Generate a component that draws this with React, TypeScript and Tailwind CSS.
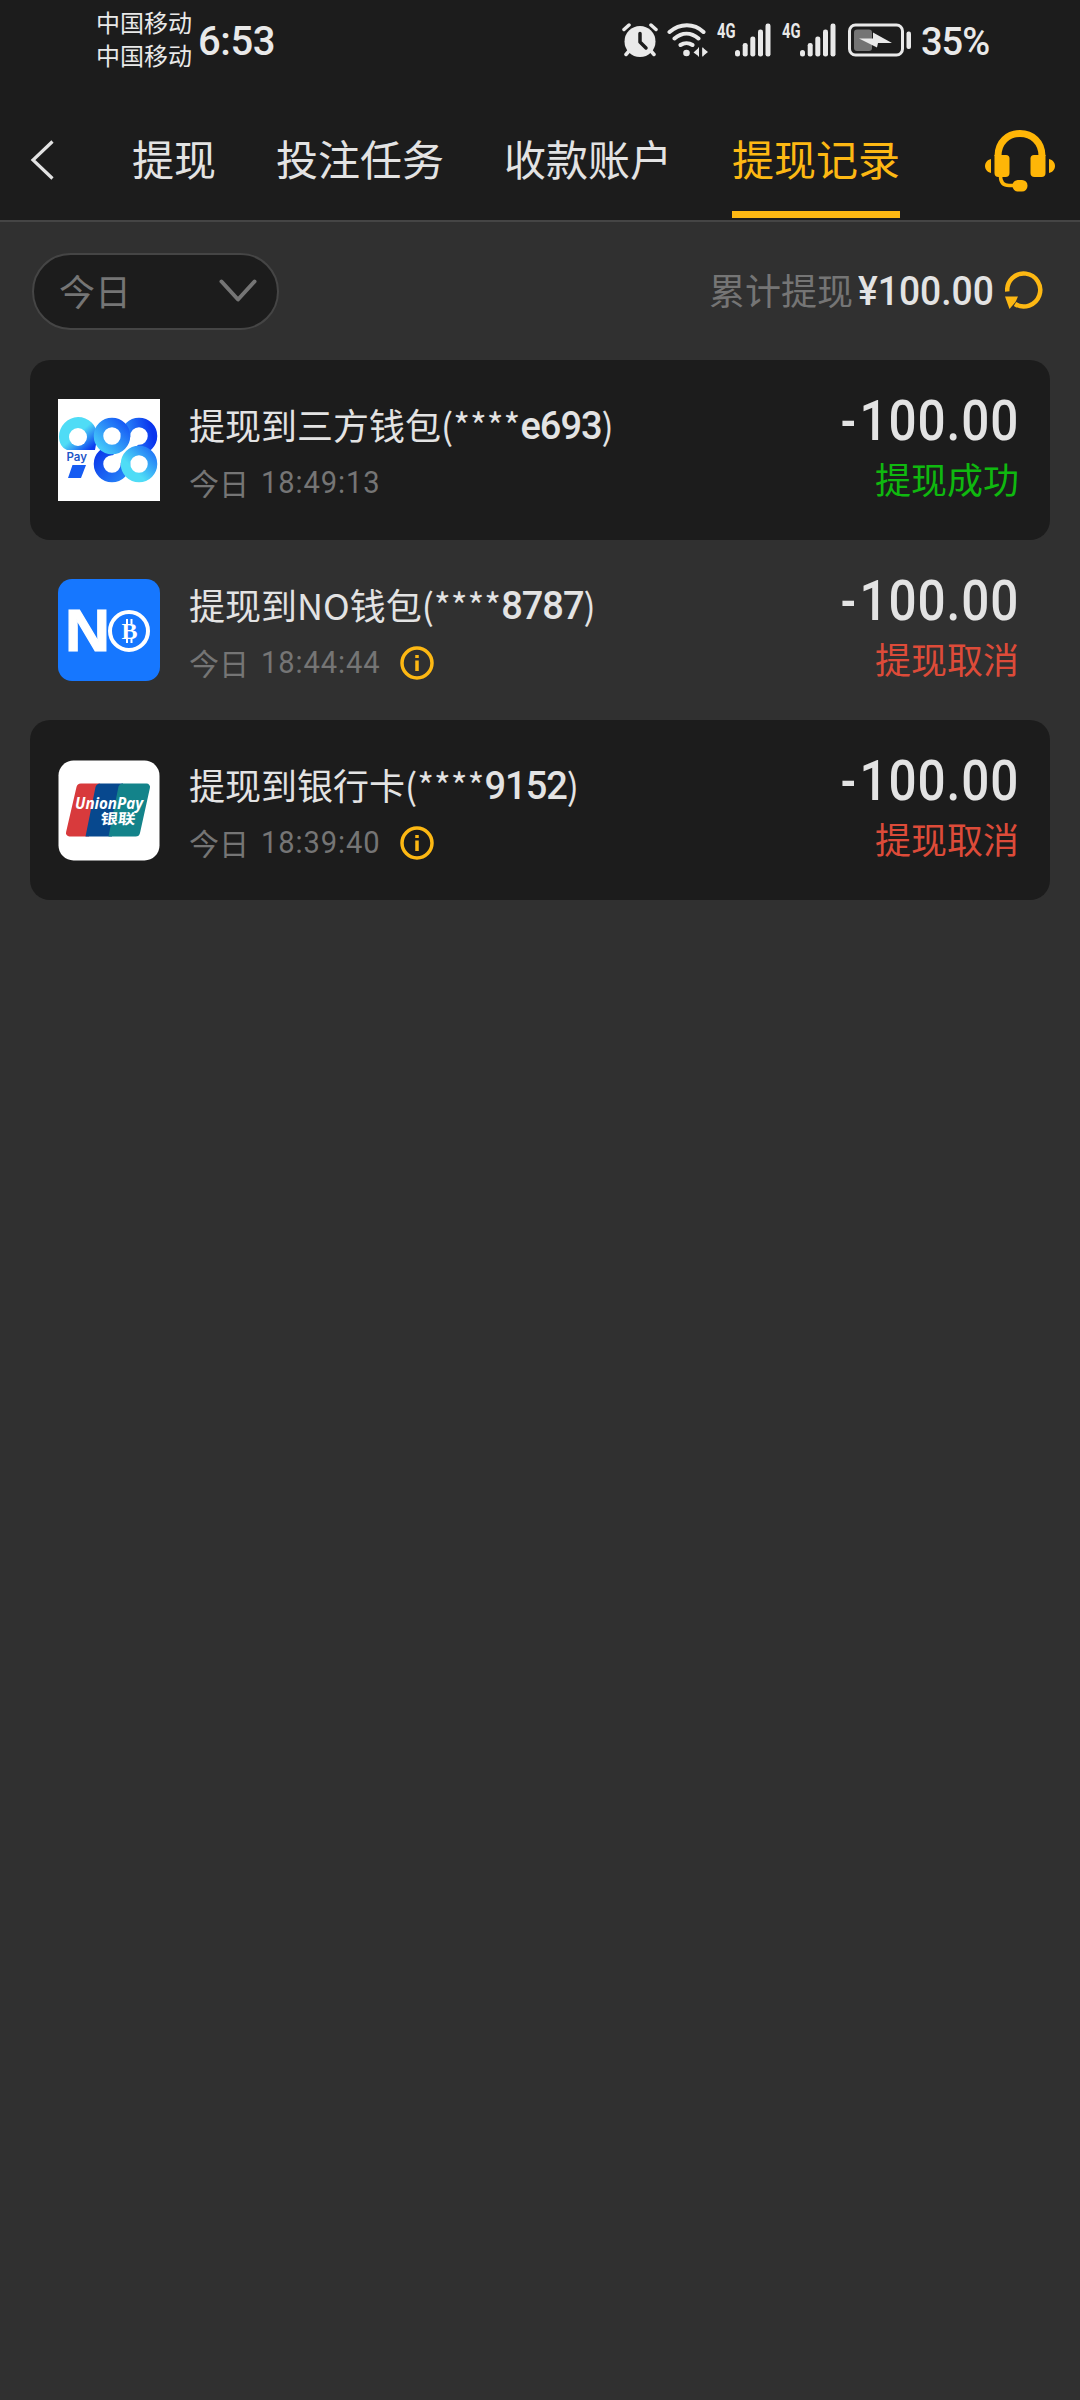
const cjk = "font-['Noto_Sans_CJK_SC',sans-serif]";
const num = "font-[Roboto,sans-serif] whitespace-nowrap";

const tabs = ["提现", "投注任务", "收款账户", "提现记录"];

const records = [
  { logo: "pay988", name: "提现到三方钱包", tail: "e693", time: "18:49:13", ok: true },
  { logo: "no", name: "提现到NO钱包", tail: "8787", time: "18:44:44", ok: false },
  { logo: "union", name: "提现到银行卡", tail: "9152", time: "18:39:40", ok: false },
];

export default function App() {
  return (
    <main className={`h-[2400px] w-[1080px] overflow-hidden bg-[#303030] ${cjk}`}>
      <header className="h-[222px] border-b-2 border-[#454545] bg-[#1c1c1c]">
        <StatusBar />
        <NavBar />
      </header>

      <div className="flex h-[138px] items-center justify-between pr-[37px] pl-8">
        <button className="flex h-[77px] w-[247px] items-center justify-between rounded-full border-2 border-[#454545] bg-[#1c1c1c] pr-5 pb-[2px] pl-[25px] text-[36px] text-[#757575]">
          <span>今日</span>
          <svg viewBox="0 0 38 24" className="mt-[2px] h-6 w-[38px]" fill="none" stroke="currentColor" strokeWidth="4" strokeLinecap="round" strokeLinejoin="round">
            <path d="M2.5 2.5 L19 20.5 L35.5 2.5" />
          </svg>
        </button>
        <div className="flex items-center pb-[2px]">
          <span className="pb-[3px] text-[36px] text-[#757575]">累计提现</span>
          <span className={`ml-[5px] w-[135px] origin-left scale-x-[0.93] pt-[3px] text-[40px] font-medium text-[#e3e3e3] ${num}`}>¥100.00</span>
          <Refresh />
        </div>
      </div>

      <ul className="px-[30px]">
        {records.map((r) => (
          <li key={r.tail} className="flex h-[180px] items-center rounded-[20px] pr-[31px] pl-7 odd:bg-[#1c1c1c]">
            {r.logo === "pay988" ? <Pay988 /> : r.logo === "no" ? <NoWallet /> : <UnionPay />}
            <div className="ml-[29px] flex-1 pt-[6px]">
              <p className="flex h-[56px] items-center text-[36px] whitespace-pre text-[#e3e3e3]">
                {r.name}(<span>****</span>
                <span className={`pt-[4px] text-[38px] font-medium tracking-[-1px] ${num}`}>{r.tail}</span>)
              </p>
              <p className="mt-[2px] flex h-[56px] items-center text-[30px] text-[#757575]">
                今日
                <span className={`ml-3 w-[120px] origin-left scale-x-[0.91] text-[32px] tracking-[1px] ${num}`}>{r.time}</span>
                {!r.ok && <Info />}
              </p>
            </div>
            <div className="flex flex-col items-end pb-[7px]">
              <span className={`flex h-[62px] origin-right scale-x-90 items-center pt-[1px] text-[55px] font-medium tracking-[1px] text-[#e3e3e3] ${num}`}>
                <span className="mr-[3px] origin-right scale-x-90">-</span>
                100.00
              </span>
              <span className={`flex h-[52px] items-center text-[36px] ${r.ok ? "text-[#0fb80f]" : "text-[#dd4b39]"}`}>
                {r.ok ? "提现成功" : "提现取消"}
              </span>
            </div>
          </li>
        ))}
      </ul>
    </main>
  );
}

function StatusBar() {
  return (
    <div className="flex h-20 items-center pl-[96px] text-[#e9e9e9]">
      <div className="pb-[4px] text-[24px] leading-[33px]">
        <p>中国移动</p>
        <p>中国移动</p>
      </div>
      <span className={`ml-[6px] w-[424px] pt-[4px] text-[40px] font-medium tracking-[-0.4px] ${num}`}>6:53</span>
      <Alarm />
      <Wifi />
      <Signal />
      <Signal />
      <Battery />
      <span className={`ml-[9px] pt-[4px] text-[38px] font-medium tracking-[-1px] ${num}`}>35%</span>
    </div>
  );
}

function NavBar() {
  return (
    <nav className="flex h-[140px] items-center pt-5 text-[42px] text-[#e3e3e3]">
      <svg viewBox="0 0 24 40" className="ml-[30px] h-10 w-6" fill="none" stroke="currentColor" strokeWidth="3.2">
        <path d="M22.5 1.5 L3 20 L22.5 38.5" />
      </svg>
      <div className="ml-[78px] flex gap-[60px]">
        {tabs.map((t) => (
          <span
            key={t}
            className={
              t === "提现记录"
                ? "flex h-[116px] items-center border-b-[7px] border-[#fdb813] pt-[2px] text-[#fdb813]"
                : "flex h-[116px] items-center pt-[2px] pb-[7px]"
            }
          >
            {t}
          </span>
        ))}
      </div>
      <Headset />
    </nav>
  );
}

function Headset() {
  return (
    <svg viewBox="0 0 70 62" className="mt-[2px] ml-[85px] h-[62px] w-[70px]" fill="#ffb607">
      <path d="M13 26 C13 12 23 3.500 35 3.500 C47 3.500 57 12 57 26" fill="none" stroke="#ffb607" strokeWidth="7" />
      <path d="M9.500 25 H21 a3.500 3.500 0 0 1 3.500 3.500 V43 a4 4 0 0 1-4 4 H13.500 a4 4 0 0 1-4-4 Z" />
      <path d="M60.500 25 H49 a3.500 3.500 0 0 0-3.500 3.500 V43 a4 4 0 0 0 4 4 H56.500 a4 4 0 0 0 4-4 Z" />
      <path d="M6 29 V43 C-2 41 -2 31 6 29 Z M64 29 V43 C72 41 72 31 64 29 Z" />
      <path d="M15.500 46 C15.500 53 19 55.500 24 55.500 H29" fill="none" stroke="#ffb607" strokeWidth="3.500" />
      <rect x="27.500" y="50" width="15" height="11.500" rx="5.500" />
    </svg>
  );
}

function Refresh() {
  return (
    <svg viewBox="0 0 38 40" className="ml-[12px] h-10 w-[38px]" fill="none" stroke="#fdb813" strokeWidth="4.500">
      <path d="M2.300 21.500 A16.500 16.500 0 1 1 10 34" />
      <path d="M0 26.500 L13 26.500 L10.500 32 L4.500 39 Z" fill="#fdb813" stroke="none" />
    </svg>
  );
}

function Info() {
  return (
    <svg viewBox="0 0 34 34" className="ml-[19px] mt-[1px] h-[34px] w-[34px]" fill="none" stroke="#fdb813" strokeWidth="3.500">
      <circle cx="17" cy="17" r="15" />
      <path d="M17 14.500 V25 M17 9 V12" />
    </svg>
  );
}

function Pay988() {
  return (
    <svg viewBox="0 0 102 102" className="h-[102px] w-[102px]">
      <defs>
        <linearGradient id="nine" x1="0" y1="0" x2="1" y2="1">
          <stop offset="0.5" stopColor="#4fdcf6" />
          <stop offset="0.9" stopColor="#0b3cf0" />
        </linearGradient>
        <linearGradient id="top" x1="0" y1="1" x2="1" y2="0">
          <stop offset="0" stopColor="#48d0fa" />
          <stop offset="1" stopColor="#1557f5" />
        </linearGradient>
        <linearGradient id="end" x1="0" y1="0.6" x2="1" y2="0.4">
          <stop offset="0" stopColor="#2d8cf8" />
          <stop offset="1" stopColor="#0a35ee" />
        </linearGradient>
        <linearGradient id="low" x1="0" y1="0" x2="1" y2="1">
          <stop offset="0" stopColor="#0b38ea" />
          <stop offset="1" stopColor="#2683f8" />
        </linearGradient>
        <linearGradient id="last" x1="0" y1="1" x2="1" y2="0">
          <stop offset="0.3" stopColor="#4fdcf6" />
          <stop offset="1" stopColor="#2176f7" />
        </linearGradient>
      </defs>
      <rect width="102" height="102" fill="#fff" />
      <path d="M20 18 A19.500 19.500 0 0 1 39.500 37 L37 51 H9 C4 49 1 44 1 37.500 A19.500 19.500 0 0 1 20 18 Z" fill="url(#nine)" />
      <circle cx="20" cy="38" r="9" fill="#fff" />
      <circle cx="54" cy="65" r="13.500" fill="none" stroke="url(#low)" strokeWidth="9.500" />
      <circle cx="81" cy="37" r="13.500" fill="none" stroke="url(#end)" strokeWidth="9.500" />
      {/* the two dark rings open into each other along the diagonal */}
      <path d="M81 37 L54 65" stroke="#fff" strokeWidth="11" />
      <circle cx="54" cy="37" r="13.500" fill="none" stroke="url(#top)" strokeWidth="9.500" />
      <circle cx="81" cy="65" r="13.500" fill="none" stroke="url(#last)" strokeWidth="9.500" />
      <text x="8.500" y="62" fontFamily="Inter" fontSize="11.500" fontWeight="600" fill="#1d55c8">Pay</text>
      <path d="M14.500 66 H28 L23 79 H10 Z" fill="#165cf2" />
    </svg>
  );
}

function NoWallet() {
  return (
    <svg viewBox="0 0 102 102" className="h-[102px] w-[102px]">
      <rect width="102" height="102" rx="14" fill="#1677ff" />
      <text x="7" y="72" fontFamily="Liberation Sans" fontSize="59" fontWeight="700" fill="#fff" stroke="#fff" strokeWidth="1.200" textLength="45" lengthAdjust="spacingAndGlyphs">N</text>
      <circle cx="71" cy="52" r="19" fill="none" stroke="#fff" strokeWidth="4" />
      <text x="63.500" y="60" fontFamily="Liberation Serif" fontSize="24" fontWeight="700" fill="#fff">B</text>
      <path d="M69 40 V45 M73.500 40 V45 M69 59 V64 M73.500 59 V64" stroke="#fff" strokeWidth="2" />
    </svg>
  );
}

function UnionPay() {
  return (
    <svg viewBox="0 0 102 102" className="h-[102px] w-[102px]">
      <rect x="0.500" y="1.500" width="101" height="100" rx="15" fill="#fff" />
      <path d="M23 24.500 H42 L31 77.500 H11.500 a3.500 3.500 0 0 1-3.400-4.500 L18.500 28 a4.500 4.500 0 0 1 4.500-3.500 Z" fill="#d83a3c" />
      <path d="M42.500 24.500 H65 L54 77.500 H27.500 L37.500 28 a5 5 0 0 1 5-3.500 Z" fill="#07488e" />
      <path d="M64 24.500 H88.500 a3.500 3.500 0 0 1 3.400 4.500 L82 74 a4.500 4.500 0 0 1-4.500 3.500 H50.500 L60.500 27.500 a4.500 4.500 0 0 1 3.500-3 Z" fill="#13838a" />
      <g fill="#fff" fontWeight="700">
        <text x="17" y="49.500" fontFamily="Open Sans" fontSize="16" fontStyle="italic" textLength="68" lengthAdjust="spacingAndGlyphs">UnionPay</text>
        <text x="43" y="65.500" fontFamily="Noto Sans CJK SC" fontSize="14.500" textLength="35" lengthAdjust="spacingAndGlyphs" transform="skewX(-6) translate(6 0)">银联</text>
      </g>
    </svg>
  );
}

function Alarm() {
  return (
    <svg viewBox="0 0 36 34" className="h-[34px] w-9" fill="none" stroke="currentColor" strokeLinecap="round">
      <circle cx="18" cy="18.500" r="15.500" fill="currentColor" stroke="none" />
      <path d="M2 6.500 L7 2 M34 6.500 L29 2 M7 28 L4 31.500 M29 28 L32 31.500" strokeWidth="3.500" />
      <path d="M18 10.500 V19 L24 25" stroke="#1c1c1c" strokeWidth="3.500" strokeLinejoin="round" />
    </svg>
  );
}

function Wifi() {
  return (
    <svg viewBox="0 0 42 34" className="ml-[9px] h-[34px] w-[42px]" fill="none" stroke="currentColor" strokeWidth="4" strokeLinecap="round">
      <path d="M2.500 9 C13 0 27 0 36.500 9 M7.500 15.500 C15 9 24 9 31.500 15.500 M13.500 22 C17 19.500 22 19.500 25.500 22" />
      <circle cx="19.500" cy="30" r="3.300" fill="currentColor" stroke="none" />
      <path d="M32 24.500 V33.500 L26.500 29.500 Z M35.500 24.500 L41 29 L35.500 33.500 Z" fill="currentColor" stroke="none" />
      <path d="M31.500 25 V33 M35.800 25 V33" strokeWidth="1" />
    </svg>
  );
}

function Signal() {
  return (
    <svg viewBox="0 0 54 34" className="ml-[8px] mr-[3px] h-[34px] w-[54px] overflow-visible" fill="currentColor">
      <text x="0" y="15" fontFamily="Roboto" fontSize="20" fontWeight="700" textLength="18.500" lengthAdjust="spacingAndGlyphs">4G</text>
      <rect x="18" y="27" width="5" height="6.500" rx="2.500" />
      <rect x="25.700" y="20" width="5" height="13.500" rx="2.300" />
      <rect x="33.300" y="13.500" width="5" height="20" rx="2.300" />
      <rect x="41" y="6.500" width="5" height="27" rx="2.300" />
      <rect x="48.500" y="0.500" width="5" height="33" rx="2.300" />
    </svg>
  );
}

function Battery() {
  return (
    <svg viewBox="0 0 64 34" className="ml-[9px] h-[34px] w-16" fill="currentColor">
      <rect x="1.500" y="2" width="53" height="30" rx="6" fill="none" stroke="currentColor" strokeWidth="3" />
      <rect x="6" y="6.500" width="18" height="21.500" rx="3" fill="#747474" />
      <path d="M11 15.500 L29 24.500 L30 20 L44 20 L25 9.500 L25 15.500 Z" />
      <rect x="58.500" y="8.500" width="4.500" height="17.500" rx="2" />
    </svg>
  );
}
